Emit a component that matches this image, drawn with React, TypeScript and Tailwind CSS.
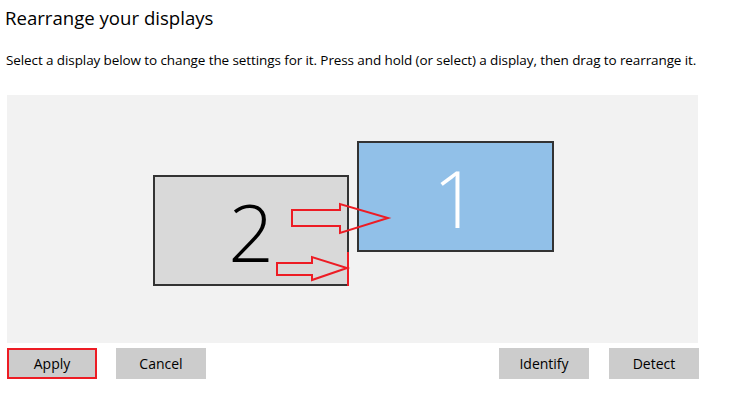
export default function App() {
  return (
    <div className="w-[735px] h-[406px] bg-white text-[#000] font-['Open_Sans','Noto_Sans',sans-serif] overflow-hidden">
      <h1 className="pl-[5px] pt-[5px] text-[18.6px] leading-[26px] font-normal">Rearrange your displays</h1>
      <p className="pl-[6px] mt-[20px] text-[13.5px] leading-[18px] tracking-[-0.1px] whitespace-nowrap">
        Select a display below to change the settings for it. Press and hold (or select) a display, then drag to rearrange it.
      </p>

      {/* display canvas */}
      <div className="relative ml-[7px] mt-[26px] w-[691px] h-[248px] bg-[#f2f2f2]">
        <div className="absolute left-[146px] top-[80px] w-[196px] h-[111px] bg-[#d9d9d9] border-2 border-[#333] flex items-center justify-center">
          <span className="text-[80px] leading-none font-light text-black">2</span>
        </div>
        <div className="absolute left-[350px] top-[46px] w-[197px] h-[111px] bg-[#91c0e8] border-2 border-[#333] flex items-center justify-center">
          <span className="text-[80px] leading-none font-light text-white">1</span>
        </div>
        <svg className="absolute inset-0" width="691" height="248" viewBox="0 0 691 248" fill="none" stroke="#ed1c24" strokeWidth="2">
          <path d="M285 115 H333 V109 L381 123 L333 138 V131 H285 Z" />
          <path d="M270 168 H305 V162 L340 173 L305 185 V180 H270 Z" />
          <path d="M341 157 V191" />
        </svg>
      </div>

      <div className="flex mt-[5px] ml-[7px] w-[692px] text-[14px]">
        <button className="w-[90px] h-[31px] bg-[#cccccc] border-2 border-[#ed1c24]">Apply</button>
        <button className="ml-[19px] w-[90px] h-[31px] bg-[#cccccc]">Cancel</button>
        <button className="ml-auto w-[90px] h-[31px] bg-[#cccccc]">Identify</button>
        <button className="ml-[20px] w-[90px] h-[31px] bg-[#cccccc]">Detect</button>
      </div>
    </div>
  )
}
